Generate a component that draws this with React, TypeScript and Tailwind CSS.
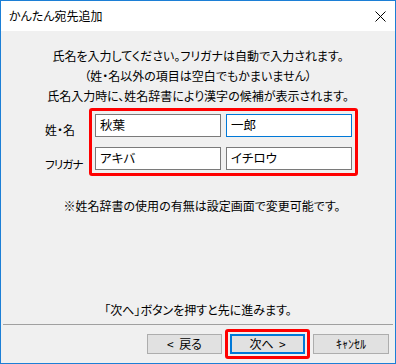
import React from 'react';

const font = "font-['Noto_Sans_CJK_JP',sans-serif] [font-feature-settings:'palt']";

const Field: React.FC<{ value: string; focused?: boolean }> = ({ value, focused }) => (
  <div
    className={`w-[126px] h-[23px] bg-white border flex items-center pl-[4px] text-[12.5px] leading-none text-black ${
      focused ? 'border-[#0078d7]' : 'border-[#7a7a7a]'
    }`}
  >
    {value}
  </div>
);

const App: React.FC = () => {
  return (
    <div className={`w-[396px] h-[364px] border border-[#1c7fd6] flex flex-col bg-[#f0f0f0] text-black ${font}`}>
      {/* title bar */}
      <div className="h-[30px] bg-white flex items-center justify-between pl-[8px] pr-[9px]">
        <span className="text-[12px]">かんたん宛先追加</span>
        <svg width="11" height="11" viewBox="0 0 11 11" className="mt-[1px]">
          <path d="M0.5 0.5 L10.5 10.5 M10.5 0.5 L0.5 10.5" stroke="#000" strokeWidth="1" />
        </svg>
      </div>

      <div className="flex-1 flex flex-col pt-[15px] pb-[9px]">
        <div className="text-[12px] leading-[20px] text-center">
          <p>氏名を入力してください。フリガナは自動で入力されます。</p>
          <p>（姓・名以外の項目は空白でもかまいません）</p>
          <p>氏名入力時に、姓名辞書により漢字の候補が表示されます。</p>
        </div>

        <div className="flex mt-[2px] pl-[44px]">
          <div className="w-[44px] flex flex-col text-[12px] pt-[12px]">
            <span className="h-[20px] leading-[20px]">姓・名</span>
            <span className="h-[20px] leading-[20px] mt-[14px] text-[11.5px] tracking-[-0.8px]">フリガナ</span>
          </div>
          <div className="border-[3px] border-[#f00] rounded-[3px] p-[3px] flex flex-col gap-[10px]">
            <div className="flex gap-[5px]">
              <Field value="秋葉" />
              <Field value="一郎" focused />
            </div>
            <div className="flex gap-[5px]">
              <Field value="アキバ" />
              <Field value="イチロウ" />
            </div>
          </div>
        </div>

        <p className="mt-[20px] text-[12px] leading-[20px] text-center pl-[8px]">
          ※姓名辞書の使用の有無は設定画面で変更可能です。
        </p>

        <div className="flex-1" />

        <p className="text-[12px] leading-[20px] text-center">「次へ」ボタンを押すと先に進みます。</p>
        <div className="mx-[2px] mt-[4px] border-t border-[#a0a0a0]" />

        <div className="mt-[9px] flex justify-end gap-[8px] pr-[6px] text-[12px]">
          <button className="w-[75px] h-[20px] bg-[#e1e1e1] border border-[#adadad] leading-none">
            &lt;&nbsp; 戻る
          </button>
          <div className="relative">
            <button className="w-[75px] h-[20px] bg-[#e1e1e1] border-2 border-[#0078d7] leading-none">
              次へ&nbsp; &gt;
            </button>
            <span className="absolute -inset-[5px] border-[3px] border-[#f00] rounded-[3px] pointer-events-none" />
          </div>
          <button className="w-[76px] h-[20px] bg-[#e1e1e1] border border-[#adadad] leading-none">
            ｷｬﾝｾﾙ
          </button>
        </div>
      </div>
    </div>
  );
};

export default App;
